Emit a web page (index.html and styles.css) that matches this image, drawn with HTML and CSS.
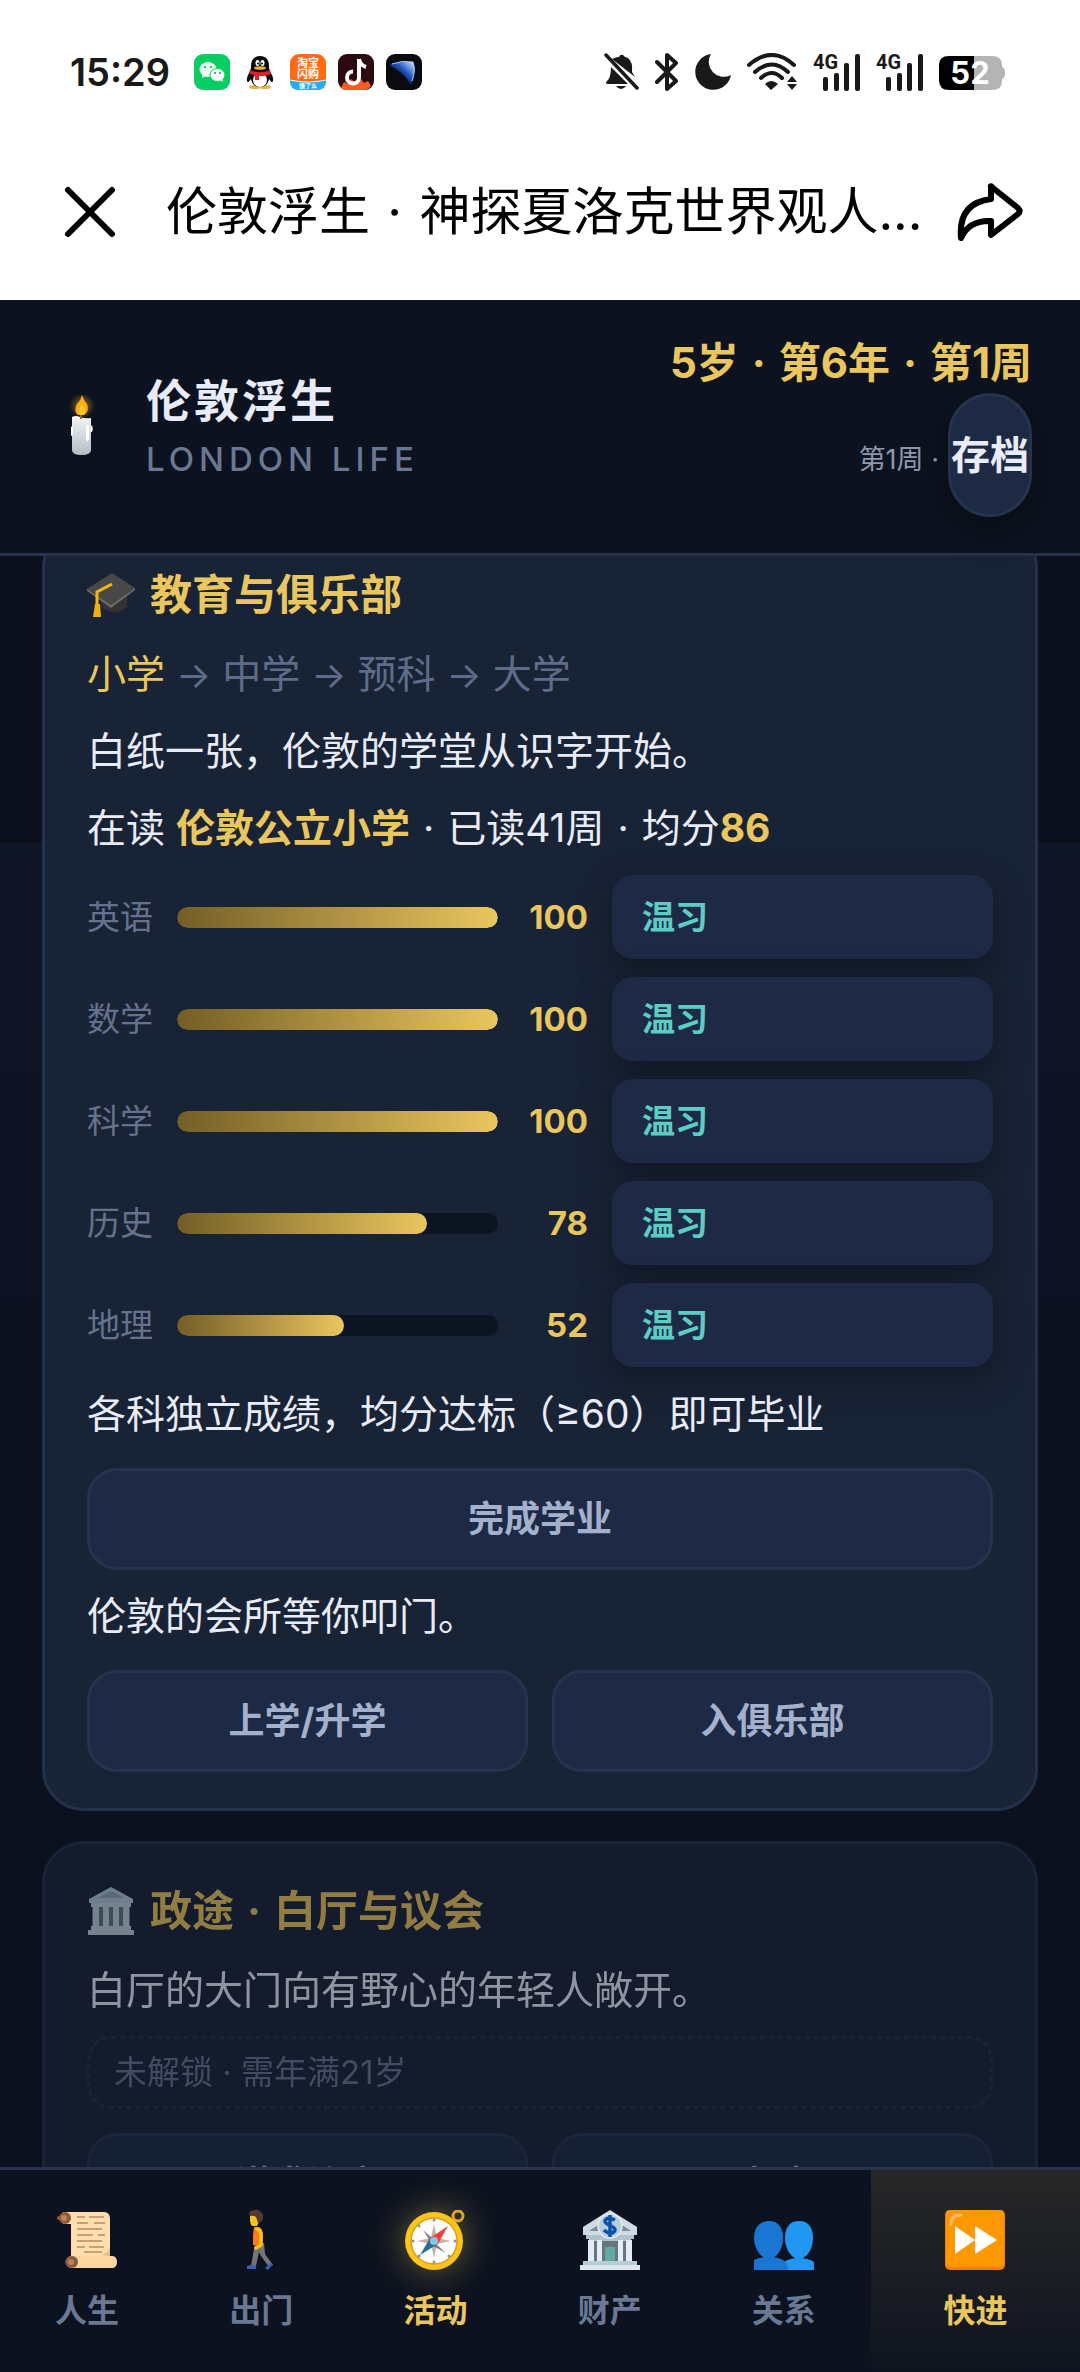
FILE: index.html
```html
<!DOCTYPE html>
<html lang="zh-CN">
<head>
<meta charset="utf-8">
<meta name="viewport" content="width=device-width, initial-scale=1">
<title>伦敦浮生</title>
<link rel="stylesheet" href="styles.css">
</head>
<body>
<div class="status">
  <span class="clock">15:29</span>
  <div class="apps">
    <svg width="36" height="36" viewBox="0 0 36 36"><rect width="36" height="36" rx="9" fill="#07ce63"/><ellipse cx="14" cy="15.500" rx="8.500" ry="7.500" fill="#e9fff2"/><path d="M8 20l0 4 4-2z" fill="#e9fff2"/><ellipse cx="23.500" cy="21" rx="7.500" ry="6.500" fill="#fff" stroke="#07ce63"/><path d="M26 26l3 2-1-4z" fill="#fff"/><g fill="#0b9c4d"><circle cx="11" cy="13" r="1"/><circle cx="17" cy="13" r="1"/><circle cx="21" cy="19" r="1"/><circle cx="26" cy="19" r="1"/></g></svg>
    <svg width="36" height="36" viewBox="0 0 36 36"><ellipse cx="13" cy="33" rx="6" ry="2" fill="#e9b33c"/><ellipse cx="23" cy="33" rx="6" ry="2" fill="#e9b33c"/><path d="M18 2c-6 0-9 4-9 10 0 4-1 5-3 9-2 5-1 7 0 7 1 0 2-2 3-3 1 5 4 8 9 8s8-3 9-8c1 1 2 3 3 3 1 0 2-2 0-7-2-4-3-5-3-9 0-6-3-10-9-10z" fill="#0b0b0d"/><ellipse cx="18" cy="26" rx="7" ry="7" fill="#fff"/><path d="M8 16c6 3 14 3 20 0l1 4c-4 2-8 2-12 2v4h-4v-5c-2 0-4-1-6-2z" fill="#e0202c"/><ellipse cx="15.500" cy="9" rx="2" ry="3" fill="#fff"/><ellipse cx="20.500" cy="9" rx="2" ry="3" fill="#fff"/><circle cx="16" cy="9.500" r="1"/><circle cx="20" cy="9.500" r="1"/><ellipse cx="18" cy="14" rx="6" ry="1.800" fill="#efb336"/></svg>
    <svg width="36" height="36" viewBox="0 0 36 36"><rect width="36" height="36" rx="9" fill="#ff6a13"/><path d="M0 26q18 4 36 0v1q0 9-9 9H9q-9 0-9-9z" fill="#22aef0"/><path d="M0 26q18 4 36 0" stroke="#fff" fill="none"/><g fill="#fff" text-anchor="middle" class="tiny"><text x="18" y="13" font-size="11">淘宝</text><text x="18" y="24" font-size="11">闪购</text><text x="18" y="34" font-size="6">饿了么</text></g></svg>
    <svg width="36" height="36" viewBox="0 0 36 36"><rect width="36" height="36" rx="9" fill="#2b0b10"/><path d="M3 34l3-6 4 2 3-5 5 4 5-4 3 4 4-2 3 5q-3 4-8 4H10q-5 0-7-2z" fill="#fb5a20"/><path d="M21 5v18.500a6 6 0 1 1-6-6" fill="none" stroke="#fff" stroke-width="4"/><path d="M21 5q1 6 7 8" fill="none" stroke="#fff" stroke-width="4"/></svg>
    <svg width="36" height="36" viewBox="0 0 36 36"><defs><linearGradient id="beam" x1="0" y1="1" x2="1" y2="0"><stop offset="0.3" stop-color="#090b10"/><stop offset=".6" stop-color="#1d55c4"/><stop offset="1" stop-color="#dff0ff"/></linearGradient></defs><rect width="36" height="36" rx="9" fill="#090b10"/><path d="M3 11Q14 6 27 8Q31 16 25 31Q18 18 3 11z" fill="url(#beam)"/><path d="M6 10Q16 6 27 8Q30 16 26 27" fill="none" stroke="#a9cdf8"/></svg>
  </div>
  <div class="signals">
    <svg width="36" height="38" viewBox="0 0 36 38" fill="#191919"><path d="M8 6Q12 4 15 4Q16 1 19 2Q20 4 24 5Q29 9 28 19L31 24zM7 14L24 31H3Q1 30 3 28Q7 25 7 14z"/><path d="M12 33h10q-2 3-5 3t-5-3z"/><path d="M2 2l31 33" stroke="#191919" stroke-width="3.500" stroke-linecap="round"/></svg>
    <svg width="24" height="38" viewBox="0 0 24 38"><path d="M2 9l19 19-9 8V2l9 8L2 29" fill="none" stroke="#191919" stroke-width="4" stroke-linejoin="round" stroke-linecap="round"/></svg>
    <svg width="38" height="38" viewBox="0 0 38 38"><path d="M17 1A18 18 0 1 0 37 22A15 15 0 0 1 17 1z" fill="#191919"/></svg>
    <svg width="51" height="38" viewBox="0 0 51 38"><g fill="none" stroke="#191919" stroke-width="4" stroke-linecap="round"><path d="M2 12Q25-8 47 12M8 19Q25 4 41 19M14 25Q25 15 35 25"/></g><path d="M18 31q6-6 13 0l-7 6zM40 29l5-6 5 6zM40 31l5 6 5-6z" fill="#191919"/></svg>
    <svg class="cell" width="48" height="38" viewBox="0 0 48 38"><g fill="#191919"><text x="0" y="16" class="net">4G</text><rect x="10" y="24" width="5" height="14" rx="2"/><rect x="21" y="20" width="5" height="18" rx="2"/><rect x="31" y="10" width="5" height="28" rx="2"/><rect x="42" y="1" width="5" height="37" rx="2"/></g></svg>
    <svg class="cell" width="48" height="38" viewBox="0 0 48 38"><g fill="#191919"><text x="0" y="16" class="net">4G</text><rect x="10" y="24" width="5" height="14" rx="2"/><rect x="21" y="20" width="5" height="18" rx="2"/><rect x="31" y="10" width="5" height="28" rx="2"/><rect x="42" y="1" width="5" height="37" rx="2"/></g></svg>
    <svg width="66" height="38" viewBox="0 0 66 38"><path d="M35 3h18q10 0 10 9v2q3 1 3 6t-3 6v2q0 9-10 9H35z" fill="#b4b4b4"/><path d="M35 3H10Q0 3 0 12v15q0 10 10 10h25z" fill="#000"/><text x="31" y="31" text-anchor="middle" class="pct" fill="#fff">52</text></svg>
  </div>
</div>
<div class="titlebar">
  <button class="plain" aria-label="关闭"><svg width="52" height="52" viewBox="0 0 52 52"><path d="M4 4l44 44M48 4L4 48" stroke="#000" stroke-width="6" stroke-linecap="round"/></svg></button>
  <h1 class="page-name">伦敦浮生<span class="dot"> · </span>神探夏洛克世界观人...</h1>
  <button class="plain" aria-label="分享"><svg width="66" height="58" viewBox="0 0 66 58"><path d="M34 4Q33 2 36 5L61 25Q64 28 61 31L34 52V38Q12 37 4 55Q1 20 34 16z" fill="none" stroke="#000" stroke-width="6" stroke-linejoin="round"/></svg></button>
</div>
<div class="app">
  <header class="top">
    <svg width="60" height="60" viewBox="0 0 60 60"><defs><linearGradient id="wax" x1="0" x2="0" y1="0" y2="1"><stop offset="0" stop-color="#f4f5f6"/><stop offset="1" stop-color="#b3bdc4"/></linearGradient><radialGradient id="halo"><stop offset="0" stop-color="#f9a825" stop-opacity=".6"/><stop offset="1" stop-color="#f9a825" stop-opacity="0"/></radialGradient></defs><circle cx="31" cy="11" r="13" fill="url(#halo)"/><path d="M21 22q4-2 8 0 6 2 11 1v32q0 5-9.500 5T21 55z" fill="url(#wax)"/><path d="M20 32q2-2 2 2v5q-2 4-2 0zM35 30h3v14q-2 5-3 0zM40 30q3 2 1 7h-1z" fill="#fff"/><path d="M30 18v6" stroke="#8a6a32" stroke-width="2"/><path d="M31 0q-1 5-5 9-4 7 1 11h6q6-4 3-11-3-3-5-9z" fill="#fbab17"/><path d="M31 9q-5 6-2 11h4q3-5-2-11z" fill="#ffca28"/></svg>
    <div class="brand"><div class="brand-cn">伦敦浮生</div><div class="brand-en">LONDON LIFE</div></div>
    <div class="when"><div class="age">5岁<span class="dot"> · </span>第6年<span class="dot"> · </span>第1周</div><div class="week"><span>第1周 ·</span><button class="save">存档</button></div></div>
  </header>
  <main class="content">
    <section class="card">
      <h2 class="card-title"><svg width="48" height="48" viewBox="0 0 48 48"><path d="M14 22h26v14q-12 10-26 0z" fill="#333"/><path d="M0 18L25 2l23 15-24 17z" fill="#484848"/><path d="M0 18l24 16 24-17v2L24 37 0 20z" fill="#6a6a6a"/><path d="M25 13L10 21v13" fill="none" stroke="#f5b90e" stroke-width="3"/><path d="M8 33h5l1 13H6z" fill="#efb00f"/></svg><span>教育与俱乐部</span></h2>
      <p class="path"><span class="now">小学</span> <span class="arrow">→</span> 中学 <span class="arrow">→</span> 预科 <span class="arrow">→</span> 大学</p>
      <p>白纸一张，伦敦的学堂从识字开始。</p>
      <p>在读 <b>伦敦公立小学</b><span class="dot"> · </span>已读41周<span class="dot"> · </span>均分<b>86</b></p>
      <div class="grades">
        <span class="subject">英语</span><div class="bar"><div class="fill" style="width:100%"></div></div><b class="score">100</b><button class="review">温习</button>
        <span class="subject">数学</span><div class="bar"><div class="fill" style="width:100%"></div></div><b class="score">100</b><button class="review">温习</button>
        <span class="subject">科学</span><div class="bar"><div class="fill" style="width:100%"></div></div><b class="score">100</b><button class="review">温习</button>
        <span class="subject">历史</span><div class="bar"><div class="fill" style="width:78%"></div></div><b class="score">78</b><button class="review">温习</button>
        <span class="subject">地理</span><div class="bar"><div class="fill" style="width:52%"></div></div><b class="score">52</b><button class="review">温习</button>
      </div>
      <p>各科独立成绩，均分达标（≥60）即可毕业</p>
      <div class="actions"><button class="action">完成学业</button></div>
      <p>伦敦的会所等你叩门。</p>
      <div class="actions"><button class="action">上学/升学</button><button class="action">入俱乐部</button></div>
    </section>
    <section class="card locked">
      <h2 class="card-title"><svg width="48" height="48" viewBox="0 0 48 48"><path d="M24 0L46 12v4H2v-4z" fill="#b4c6d3"/><path d="M24 4L38 11H10z" fill="#8ea4b2"/><path d="M5 16h38v24H5z" fill="#5f7481"/><g fill="#bdced9"><path d="M4 16h40v4H4zM6 19h6v21H6zM16 19h6v21h-6zM26 19h6v21h-6zM36 19h6v21h-6zM4 39h40v4H4zM1 43h46v5H1z"/></g></svg><span>政途<span class="dot"> · </span>白厅与议会</span></h2>
      <p>白厅的大门向有野心的年轻人敞开。</p>
      <div class="lock">未解锁 · 需年满21岁</div>
      <div class="actions"><button class="action" disabled>谋求议席</button><button class="action" disabled>竞选</button></div>
    </section>
  </main>
  <nav class="tabs">
    <button class="tab"><svg width="60" height="60" viewBox="0 0 60 60"><path d="M6 2h41q6 0 6 7v38H14V14H6z" fill="#ffdfb0"/><path d="M42 45q8 0 11-7v8z" fill="#e3bd84"/><path d="M14 46h42q4 1 4 6t-4 6H14q-5-1-5-6t5-6z" fill="#fbd6a0"/><g fill="#8b5a38"><circle cx="8" cy="8" r="6"/><circle cx="15" cy="52" r="6"/><circle cx="2" cy="8" r="2"/><circle cx="10" cy="52" r="2"/></g><circle cx="7" cy="8" r="3" fill="#b98358"/><circle cx="14" cy="52" r="3" fill="#b98358"/><path d="M20 7h8m4 0h15M20 13h11m6 0h11M20 19h25M20 25h16m5 0h7M20 31h25M20 37h8m4 0h15M27 42h18" stroke="#b98b5a" stroke-width="1.500"/></svg>人生</button>
    <button class="tab"><svg width="60" height="60" viewBox="0 0 60 60"><path d="M24 33h9l1 11 8 11-4 2-8-11-2-4-3 14h-5z" fill="#757575"/><path d="M16 56l4-1h5v4h-9zM34 58l5-5 3 1-5 6z" fill="#3f5fb0"/><path d="M23 17h5q4 2 4 9l-1 9h-9V25z" fill="#fb7c14"/><path d="M26 19q4 1 4 7v9l-5 3" fill="none" stroke="#fcc21b" stroke-width="3.500" stroke-linecap="round"/><path d="M19 4h9v8l-2 4h-5q-2-2-2-6z" fill="#fcc21b"/><path d="M18 4q1-5 9-4 6 2 5 9-2 4-5 4l-2-6q-3-2-6-1z" fill="#543930"/></svg>出门</button>
    <button class="tab active"><svg width="60" height="60" viewBox="0 0 60 60"><circle cx="53" cy="6" r="5" fill="none" stroke="#e0a91c" stroke-width="3"/><circle cx="29" cy="31" r="29" fill="#fbc51b"/><circle cx="29" cy="31" r="23" fill="#fff" stroke="#dc9f12" stroke-width="1.500"/><path d="M29 14l3 14 14 3-14 3-3 14-3-14-14-3 14-3z" fill="#c9b0a5"/><path d="M18 20l9 8 4 6 10 9-13-7z" fill="#8b7c75"/><path d="M43 16L33 34l-8-6z" fill="#f44336"/><path d="M15 45l10-17 8 6z" fill="#2d6f92"/><circle cx="29" cy="31" r="4" fill="#82c8e6"/><g fill="#8f8f8f"><circle cx="29" cy="10" r="1.500"/><circle cx="29" cy="52" r="1.500"/><circle cx="8" cy="31" r="1.500"/><circle cx="50" cy="31" r="1.500"/><circle cx="14" cy="16" r="1.500"/><circle cx="14" cy="46" r="1.500"/><circle cx="44" cy="46" r="1.500"/></g></svg>活动</button>
    <button class="tab"><svg width="60" height="60" viewBox="0 0 60 60"><path d="M30 0l27 17v8H3v-8z" fill="#cfdbe4"/><path d="M30 7l21 14H9z" fill="#7d8b94"/><path d="M6 25h48v4H6zM9 29h42v23H9z" fill="#b2c2cd"/><path d="M14 31h32v21H14z" fill="#66757e"/><path d="M8 30h6v22H8zM17 30h5v22h-5zM38 30h5v22h-5zM46 30h6v22h-6z" fill="#e3edf3"/><path d="M25 37h10v15H25z" fill="#62aaa4"/><circle cx="30" cy="16" r="12" fill="#b7cddc" stroke="#e3edf3" stroke-width="1.500"/><path d="M35 10q-8-4-10 1c0 5 10 4 10 9-2 5-8 3-11 0M30 5v22" fill="none" stroke="#0b51a5" stroke-width="3.500"/><path d="M3 51h54v5H3z" fill="#b9cbd6"/><path d="M0 55h60v5H0z" fill="#dbe6ed"/></svg>财产</button>
    <button class="tab"><svg width="60" height="60" viewBox="0 0 60 60"><path d="M30 60V52q6-4 15-4t15 4v8z" fill="#2196f3"/><path d="M45 11c9 0 14 6 14 17 0 12-7 21-14 21s-14-9-14-21c0-11 5-17 14-17z" fill="#2196f3"/><path d="M0 60V50q6-3 15-3 19 0 19 13z" fill="#1976d2"/><path d="M15 11c9 0 14 6 14 17 0 12-7 21-14 21S0 40 0 28c0-11 6-17 15-17z" fill="#1976d2"/></svg>关系</button>
    <button class="tab fast"><svg width="60" height="60" viewBox="0 0 60 60"><rect width="60" height="60" rx="5" fill="#ee8100"/><rect x="1" y="0" width="58" height="57" rx="4" fill="#ff9800"/><path d="M10 16v28l20-14zM30 16v28l22-14z" fill="#fff"/><path d="M6 14q0-9 10-9" fill="none" stroke="#ffbd61" stroke-width="3" stroke-linecap="round"/></svg>快进</button>
  </nav>
</div>
</body>
</html>
```
FILE: styles.css
```css
* { box-sizing: border-box; }
html, body { height: 100%; margin: 0; }
body {
  display: flex;
  flex-direction: column;
  background: #fff;
  font-family: Inter, "Noto Sans CJK SC", sans-serif;
  font-size: 39px;
  line-height: 62px;
}
button { margin: 0; padding: 0; border: 0; font: inherit; cursor: pointer; }
svg { display: block; flex: none; }
b { font-weight: 700; }
.dot { padding: 0 3px; white-space: pre; }

.status {
  display: flex;
  align-items: center;
  height: 144px;
  padding: 0 75px 0 70px;
  color: #191919;
}
.clock { font-size: 38px; font-weight: 600; }
.apps { display: flex; gap: 12px; margin-left: 24px; }
.tiny { font-weight: 700; }
.signals { display: flex; align-items: center; gap: 15px; margin-left: auto; }
.cell { overflow: visible; }
.net { font: 700 20px/20px "Liberation Sans Narrow", Roboto, sans-serif; }
.pct { font-size: 31px; font-weight: 700; }

.titlebar {
  display: flex;
  align-items: center;
  height: 156px;
  padding: 0 57px 20px 64px;
}
.plain { background: none; color: #000; }
.page-name {
  flex: 1;
  margin: 0;
  padding-left: 50px;
  overflow: hidden;
  white-space: nowrap;
  font-size: 51px;
  font-weight: 400;
  color: #000;
}

.app {
  flex: 1;
  min-height: 0;
  display: flex;
  flex-direction: column;
  background: #0b101d;
  color: #e8ecf8;
}
.top {
  position: relative;
  z-index: 1;
  display: flex;
  align-items: center;
  padding: 33px 48px 36px 51px;
  background: #0c121f;
  border-bottom: 3px solid #28324f;
}
.brand { margin-left: 35px; padding-top: 8px; }
.brand-cn { font-size: 45px; line-height: 60px; font-weight: 700; letter-spacing: 3px; }
.brand-en { font-size: 33px; line-height: 54px; font-weight: 500; letter-spacing: 5px; color: #6b7894; }
.when { margin-left: auto; text-align: right; }
.age { font-size: 42px; line-height: 60px; font-weight: 700; color: #eac65e; }
.week { display: flex; align-items: baseline; justify-content: flex-end; gap: 9px; font-size: 27px; color: #8f98ab; }
.save {
  height: 124px;
  border: 3px solid #26334e;
  border-radius: 42px;
  background: #1e2a44;
  box-shadow: 0 12px 36px rgba(0, 0, 0, .35);
  color: #e8ecf8;
  font-size: 39px;
  font-weight: 700;
}

.content {
  flex: 1;
  min-height: 0;
  overflow: hidden;
  padding: 0 42px;
  background: linear-gradient(#0b101c 0 286px, #0f1628 288px, #0b111f 900px);
}
.card {
  margin-bottom: 30px;
  padding: 36px 42px;
  border: 3px solid #25314b;
  border-radius: 42px;
  background: #192336;
}
/* the list is scrolled a little under the header */
.card:first-child { margin-top: -31px; }
.card-title {
  display: flex;
  align-items: center;
  gap: 15px;
  margin: 0 0 17px;
  font-size: 42px;
  line-height: 62px;
  font-weight: 700;
  color: #eac65e;
}
.card p { margin: 0 0 15px; }
.card p .dot { padding: 0 2px; }
.card b, .card .now { color: #eac65e; }
.card .path { color: #5f6c89; }
.arrow { font-size: 37px; line-height: 39px; }

.grades {
  display: grid;
  grid-template-columns: 66px 321fr 66px 381fr;
  align-items: center;
  gap: 18px 24px;
  margin: 16px 0;
  font-size: 33px;
}
.subject { color: #66728d; white-space: nowrap; }
.bar { height: 21px; border-radius: 11px; background: #0c1422; overflow: hidden; }
.fill { height: 100%; border-radius: 11px; background: linear-gradient(90deg, #735e27, #eac65e); }
.score { text-align: right; }
.review {
  height: 84px;
  padding: 0 30px;
  border-radius: 21px;
  background: #1e2a45;
  box-shadow: 0 12px 36px rgba(0, 0, 0, .35);
  color: #5ccdc4;
  font-weight: 700;
  text-align: left;
}
.actions { display: flex; gap: 24px; margin: 23px 0 15px; }
.actions:last-child { margin-bottom: 0; }
.action {
  flex: 1;
  height: 102px;
  border: 3px solid #26334e;
  border-radius: 30px;
  background: #1e2a45;
  color: #a3b1cc;
  font-size: 36px;
  font-weight: 700;
}
.locked { opacity: .6; }
.lock {
  margin-bottom: 24px;
  padding: 6px 24px;
  border: 3px dashed #25314b;
  border-radius: 24px;
  color: #66728d;
  font-size: 33px;
  line-height: 55px;
}

.tabs {
  display: flex;
  border-top: 3px solid #28324f;
  background: #0c121f;
}
.tab {
  flex: 5;
  display: flex;
  flex-direction: column;
  align-items: center;
  gap: 18px;
  padding: 40px 0 38px;
  background: none;
  color: #6b7894;
  font-size: 32px;
  line-height: 46px;
  font-weight: 600;
}
.active { color: #eac65e; font-weight: 700; }
.active svg { filter: drop-shadow(0 0 18px rgba(234, 198, 94, .45)); }
.fast {
  flex: 6;
  background: linear-gradient(#272727, #0f1420);
  color: #eac65e;
  font-weight: 700;
}
```
